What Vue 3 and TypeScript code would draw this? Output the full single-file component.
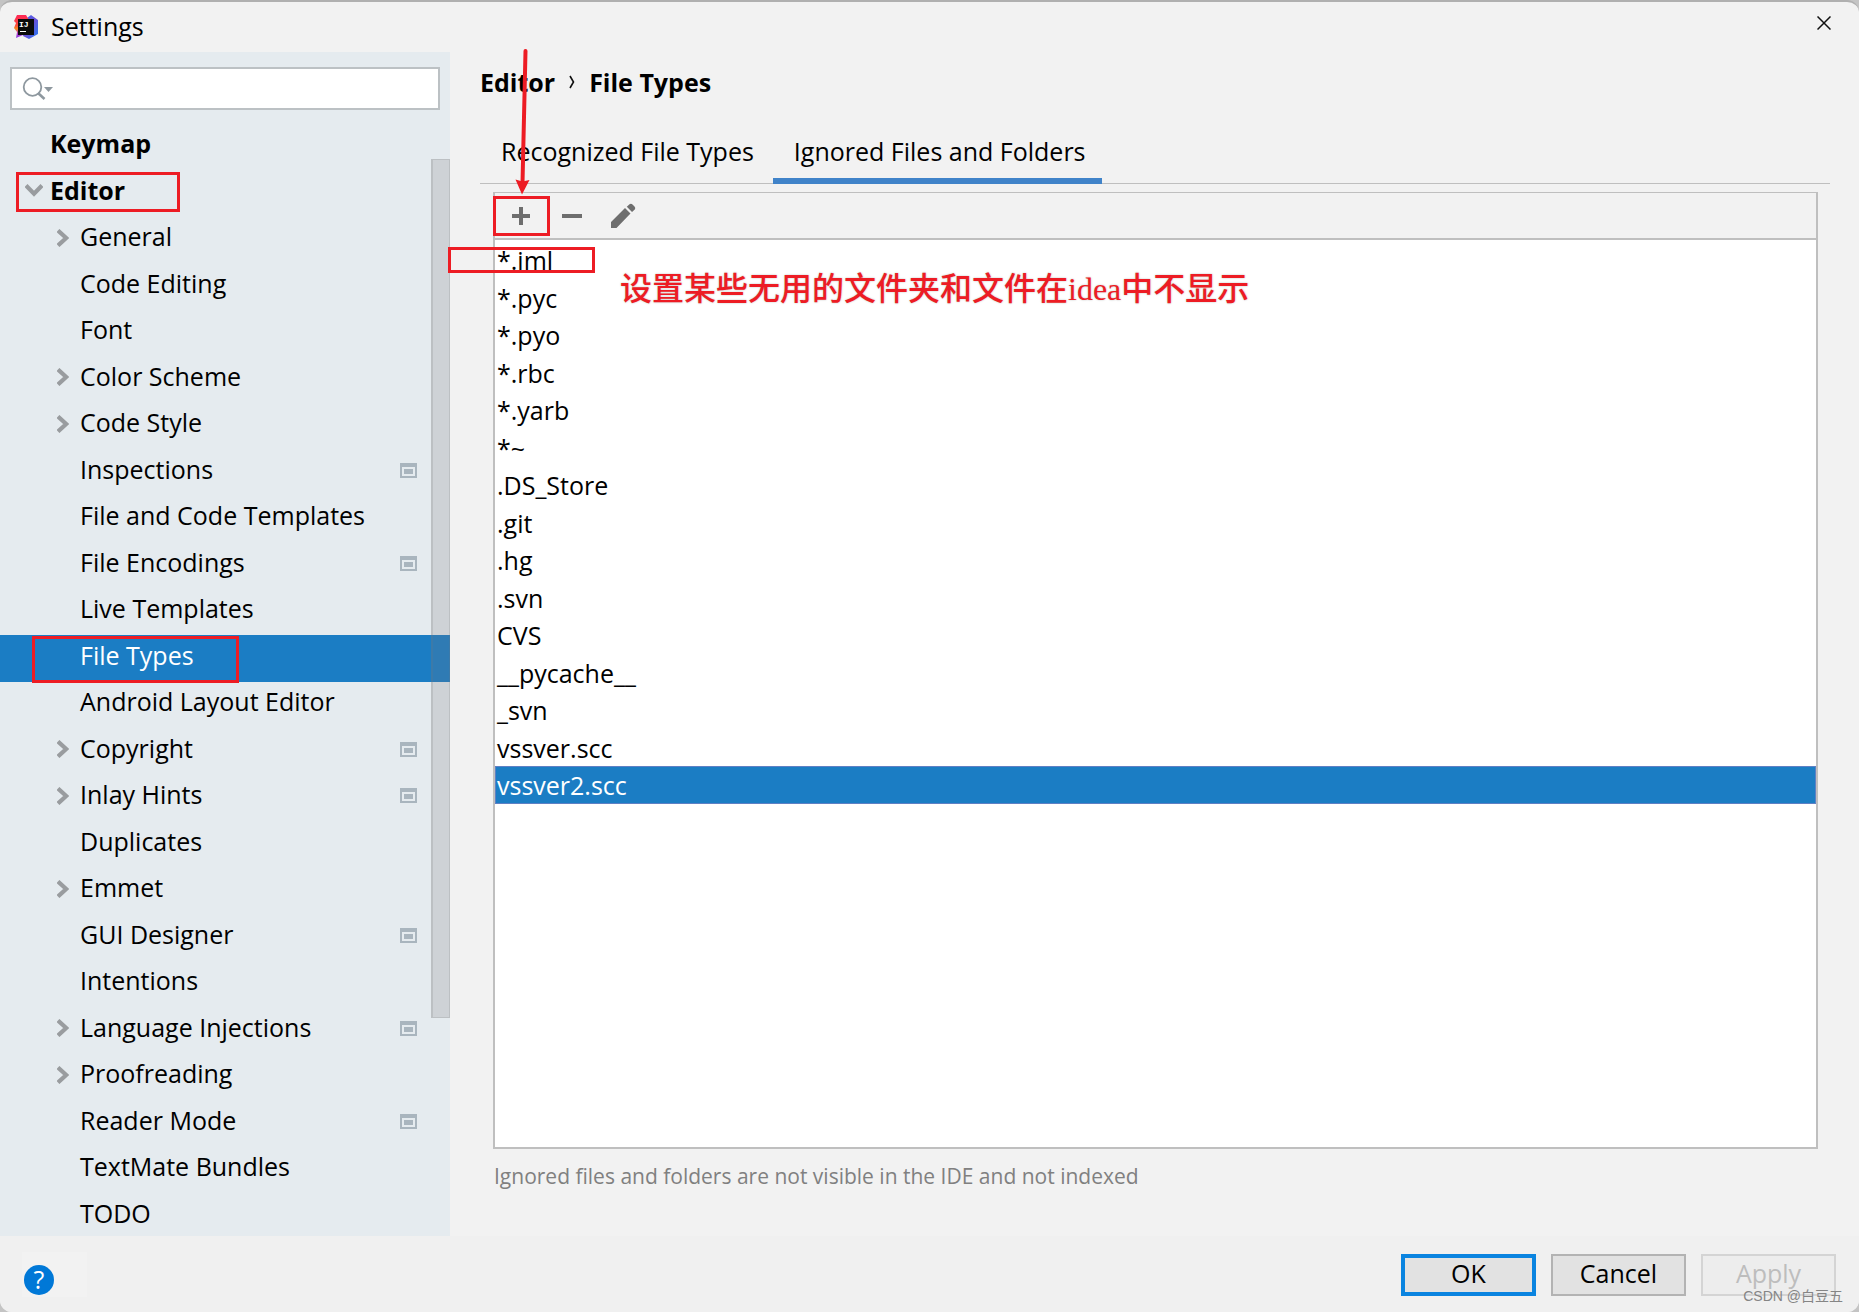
<script setup lang="ts">
import { ref } from 'vue'

interface TreeNode {
  label: string
  level: 0 | 1
  arrow?: 'open' | 'closed'
  project?: boolean
  marked?: boolean
}

const tree: TreeNode[] = [
  { label: 'Keymap', level: 0 },
  { label: 'Editor', level: 0, arrow: 'open', marked: true },
  { label: 'General', level: 1, arrow: 'closed' },
  { label: 'Code Editing', level: 1 },
  { label: 'Font', level: 1 },
  { label: 'Color Scheme', level: 1, arrow: 'closed' },
  { label: 'Code Style', level: 1, arrow: 'closed' },
  { label: 'Inspections', level: 1, project: true },
  { label: 'File and Code Templates', level: 1 },
  { label: 'File Encodings', level: 1, project: true },
  { label: 'Live Templates', level: 1 },
  { label: 'File Types', level: 1, marked: true },
  { label: 'Android Layout Editor', level: 1 },
  { label: 'Copyright', level: 1, arrow: 'closed', project: true },
  { label: 'Inlay Hints', level: 1, arrow: 'closed', project: true },
  { label: 'Duplicates', level: 1 },
  { label: 'Emmet', level: 1, arrow: 'closed' },
  { label: 'GUI Designer', level: 1, project: true },
  { label: 'Intentions', level: 1 },
  { label: 'Language Injections', level: 1, arrow: 'closed', project: true },
  { label: 'Proofreading', level: 1, arrow: 'closed' },
  { label: 'Reader Mode', level: 1, project: true },
  { label: 'TextMate Bundles', level: 1 },
  { label: 'TODO', level: 1 },
]

const patterns = [
  '*.iml', '*.pyc', '*.pyo', '*.rbc', '*.yarb', '*~', '.DS_Store', '.git',
  '.hg', '.svn', 'CVS', '__pycache__', '_svn', 'vssver.scc', 'vssver2.scc',
]

const tabs = ['Recognized File Types', 'Ignored Files and Folders']

const page = ref('File Types')
const tab = ref(tabs[1])
const pattern = ref('vssver2.scc')
const query = ref('')
</script>

<template>
  <div class="window">
    <header class="titlebar">
      <svg class="logo" viewBox="0 0 24 24" aria-hidden="true">
        <defs>
          <linearGradient id="lg-blue" x1="0" y1="0" x2="1" y2="1">
            <stop offset="0" stop-color="#3a6cf0" />
            <stop offset="0.5" stop-color="#6a4fd8" />
            <stop offset="1" stop-color="#1f7cf2" />
          </linearGradient>
          <linearGradient id="lg-red" x1="0" y1="0" x2="0" y2="1">
            <stop offset="0" stop-color="#fe2857" />
            <stop offset="0.45" stop-color="#fc4a3a" />
            <stop offset="0.6" stop-color="#f98a1e" />
            <stop offset="0.8" stop-color="#b43fd0" />
            <stop offset="1" stop-color="#8a3ee0" />
          </linearGradient>
        </defs>
        <path d="M13 3 17 0 24 5 24 19 15 24 9 21Z" fill="url(#lg-blue)" />
        <path d="M3 0 12 0 15 5 9 20 2 23 3 17 0 13 2 8 0 6Z" fill="url(#lg-red)" />
        <rect x="4" y="4" width="16" height="16" fill="#0a0a0a" />
        <text x="5" y="12" class="logo-text">IJ</text>
        <rect x="6" y="16" width="6" height="1" fill="#fff" />
      </svg>
      <h1 class="title">Settings</h1>
      <button class="close" type="button" aria-label="Close">
        <svg viewBox="0 0 14 14" width="14" height="14"><path d="M0.500 0.500 13.500 13.500M13.500 0.500 0.500 13.500" stroke="#111" stroke-width="1.500" fill="none" /></svg>
      </button>
    </header>

    <div class="body">
      <aside class="sidebar">
        <label class="search">
          <svg width="32" height="24" viewBox="0 0 32 24" aria-hidden="true">
            <circle cx="10.500" cy="10" r="8.800" fill="none" stroke="#8e989f" stroke-width="1.800" />
            <path d="M16 16 22.500 22" stroke="#8e989f" stroke-width="2.600" />
            <path d="M22 10H31L26.500 15Z" fill="#8e989f" />
          </svg>
          <input v-model="query" type="text" aria-label="Search settings" />
        </label>

        <nav class="tree" aria-label="Settings pages">
          <button
            v-for="node in tree"
            :key="node.label"
            type="button"
            class="node"
            :class="{ top: node.level === 0, selected: node.label === page }"
            @click="page = node.label"
          >
            <span class="twisty">
              <svg v-if="node.arrow === 'closed'" width="12" height="18" viewBox="0 0 12 18"><path d="M1 1.500 9.200 9 1 16.500" fill="none" stroke="#999c9f" stroke-width="4.200" /></svg>
              <svg v-else-if="node.arrow === 'open'" width="18" height="14" viewBox="0 0 18 14"><path d="M1 1.500 9 9.800 17 1.500" fill="none" stroke="#999c9f" stroke-width="4.200" /></svg>
            </span>
            <span class="node-label">{{ node.label }}</span>
            <svg v-if="node.project" class="project" width="17" height="15" viewBox="0 0 17 15">
              <path d="M0 0H17V15H0Z" fill="#a9b5be" />
              <path d="M2 4H15V13H2Z" fill="#e5ebef" />
              <path d="M4 6H13V11H4Z" fill="#a9b5be" />
            </svg>
            <span v-if="node.marked" class="mark"></span>
          </button>
        </nav>
        <div class="scroll-thumb"></div>
      </aside>

      <main class="content">
        <div class="crumbs">
          <span>Editor</span>
          <svg width="6" height="14" viewBox="0 0 6 14"><path d="M1 1 4.500 7 1 13" fill="none" stroke="#111" stroke-width="1.600" /></svg>
          <span>File Types</span>
        </div>

        <div class="tabs" role="tablist">
          <button
            v-for="name in tabs"
            :key="name"
            type="button"
            role="tab"
            class="tab"
            :class="{ active: name === tab }"
            :aria-selected="name === tab"
            @click="tab = name"
          >{{ name }}</button>
        </div>

        <section class="panel">
          <div class="toolbar">
            <button type="button" class="tool" aria-label="Add">
              <svg width="20" height="20" viewBox="0 0 20 20"><path d="M10 1V19M1 10H19" stroke="#6e6e6e" stroke-width="4" /></svg>
              <span class="mark"></span>
              <svg class="arrow" width="16" height="146" viewBox="0 0 16 146" aria-hidden="true">
                <path d="M10.500 2 7.500 134" stroke="#ed1c24" stroke-width="4" stroke-linecap="round" />
                <path d="M0.500 130.500 7.500 132.500 14.500 131 7 145.500Z" fill="#ed1c24" />
              </svg>
            </button>
            <button type="button" class="tool" aria-label="Remove">
              <svg width="20" height="20" viewBox="0 0 20 20"><path d="M0 10H20" stroke="#6e6e6e" stroke-width="4" /></svg>
            </button>
            <button type="button" class="tool" aria-label="Edit">
              <svg width="26" height="26" viewBox="0 0 26 26"><path d="M1 19 15 5 20.500 10.500 6.500 25H1ZM16.800 3.800 19.500 1.200Q21 0 22.500 1.500L24.500 3.500Q26 5 24.800 6.500L22 9Z" fill="#6e6e6e" /></svg>
            </button>
          </div>
          <ul class="list" role="listbox" aria-label="Ignored files and folders">
            <li
              v-for="item in patterns"
              :key="item"
              role="option"
              class="row"
              :class="{ selected: item === pattern }"
              :aria-selected="item === pattern"
              @click="pattern = item"
            >
              {{ item }}
              <span v-if="item === '*.iml'" class="mark"></span>
            </li>
          </ul>
          <p class="note">设置某些无用的文件夹和文件在idea中不显示</p>
        </section>

        <p class="hint">Ignored files and folders are not visible in the IDE and not indexed</p>
      </main>
    </div>

    <footer class="footer">
      <div class="help-box"><button type="button" class="help" aria-label="Help">?</button></div>
      <div class="actions">
        <button type="button" class="btn primary">OK</button>
        <button type="button" class="btn">Cancel</button>
        <button type="button" class="btn" disabled>Apply</button>
      </div>
      <span class="watermark">CSDN @白豆五</span>
    </footer>
  </div>
</template>

<style>
body {
  background: #c4c4c4;
}
</style>

<style scoped>
* {
  box-sizing: border-box;
}

button {
  font: inherit;
  color: inherit;
  border: 0;
  padding: 0;
  background: none;
}

.window {
  display: flex;
  flex-direction: column;
  min-height: 100vh;
  overflow: hidden;
  border-top: 2px solid #b0b0b0;
  border-radius: 12px;
  background: #f2f2f2;
  color: #000;
  font: 25px/34px "Open Sans", "Noto Sans", sans-serif;
}

.titlebar {
  display: flex;
  align-items: center;
  height: 50px;
  padding: 0 28px 0 14px;
}

.logo {
  width: 24px;
  height: 24px;
}

.logo-text {
  font: bold 8px "Liberation Mono", monospace;
  fill: #fff;
}

.title {
  flex: 1;
  margin: 0 0 2px 13px;
  font-size: 25px;
  font-weight: 400;
}

.close {
  align-self: flex-start;
  display: flex;
  padding-top: 14px;
}

.body {
  flex: 1;
  display: flex;
}

.sidebar {
  position: relative;
  flex: none;
  width: 450px;
  height: 1184px;
  overflow: hidden;
  padding-top: 15px;
  background: #e5ebef;
}

.search {
  display: flex;
  align-items: center;
  height: 43px;
  margin: 0 10px 14px;
  padding-left: 10px;
  border: 2px solid #bcc1c4;
  background: #fff;
}

.search input {
  flex: 1;
  border: 0;
  outline: 0;
  background: none;
  font: inherit;
}

.node {
  position: relative;
  display: flex;
  align-items: center;
  width: 100%;
  height: 46px;
  padding: 0 33px 5px 49px;
  text-align: left;
}

.node:nth-child(even) {
  height: 47px;
}

.node.top {
  padding-left: 17px;
  font-weight: 700;
}

.node.selected {
  background: #1b7dc4;
  color: #fff;
}

.twisty {
  display: flex;
  flex: none;
  justify-content: center;
  width: 27px;
  margin-right: 4px;
}

.top .twisty {
  justify-content: flex-start;
  width: 33px;
  margin-right: 0;
  padding-left: 8px;
}

.node-label {
  flex: 1;
  padding-bottom: 3px;
}

.mark {
  position: absolute;
  border: 3px solid #ed1c24;
}

.node .mark {
  left: 32px;
  top: 1px;
  bottom: -1px;
  width: 207px;
}

.node.top .mark {
  left: 16px;
  top: 2px;
  bottom: 5px;
  width: 164px;
}

.scroll-thumb {
  position: absolute;
  right: 0;
  top: 107px;
  width: 19px;
  height: 859px;
  border: 1px solid rgba(121, 118, 121, 0.2);
  border-left-width: 2px;
  background: rgba(121, 118, 121, 0.21);
}

.content {
  flex: 1;
  display: flex;
  flex-direction: column;
  min-width: 0;
  padding: 13px 29px 0 30px;
}

.crumbs {
  display: flex;
  align-items: center;
  gap: 14px;
  font-weight: 700;
}

.tabs {
  display: flex;
  gap: 3px;
  height: 60px;
  margin-top: 25px;
  border-bottom: 1px solid #bfbfbf;
}

.tab {
  height: 60px;
  padding: 0 16px 0 21px;
  border-bottom: 6px solid transparent;
}

.tab.active {
  border-bottom-color: #4083c9;
}

.panel {
  position: relative;
  flex: 1;
  display: flex;
  flex-direction: column;
  margin: 8px 12px 0 13px;
  border: 2px solid #bfbfbf;
  border-top-width: 1px;
  background: #fff;
}

.toolbar {
  display: flex;
  align-items: center;
  height: 47px;
  border-bottom: 2px solid #bfbfbf;
  background: #f2f2f2;
}

.tool {
  position: relative;
  display: flex;
  align-items: center;
  justify-content: center;
  width: 51px;
  height: 45px;
}

.tool .mark {
  left: -2px;
  top: 3px;
  width: 57px;
  height: 40px;
}

.arrow {
  position: absolute;
  left: 20px;
  bottom: 43px;
  z-index: 1;
}

.list {
  margin: 0;
  padding: 1px 0 0;
  list-style: none;
}

.row {
  position: relative;
  height: 38px;
  padding-left: 2px;
  line-height: 38px;
}

.row:nth-child(even) {
  height: 37px;
}

.row.selected {
  border: 1px solid #5f80c4;
  padding-left: 1px;
  background: #1b7dc4;
  color: #fff;
  line-height: 36px;
}

.row .mark {
  left: -47px;
  top: 6px;
  width: 147px;
  height: 26px;
}

.note {
  position: absolute;
  left: 125px;
  top: 73px;
  margin: 0;
  color: #ed1c24;
  font: 500 32px/46px "Liberation Serif", "Noto Sans CJK SC", serif;
  text-shadow: 0 0 2px #bbb;
}

.hint {
  margin: 12px 14px 44px;
  color: #808080;
  font-size: 21px;
  line-height: 31px;
}

.footer {
  position: relative;
  display: flex;
  align-items: flex-start;
  justify-content: space-between;
  height: 76px;
  padding: 16px 23px 0 22px;
  background: #f0f0f0;
}

.help-box {
  width: 65px;
  height: 45px;
  padding: 10px 2px;
  background: #f2f2f2;
}

.help {
  width: 30px;
  height: 30px;
  padding-bottom: 2px;
  border-radius: 50%;
  background: #0078d7;
  color: #fff;
  line-height: 28px;
}

.actions {
  display: flex;
  gap: 15px;
  padding-top: 2px;
}

.btn {
  width: 135px;
  height: 42px;
  padding-bottom: 4px;
  border: 2px solid #b3b3b3;
  background: #e2e2e2;
  line-height: 30px;
}

.btn.primary {
  border: 4px solid #0a84e0;
}

.btn:disabled {
  border-color: #d4d4d4;
  background: #ededed;
  color: #bdbdbd;
}

.watermark {
  position: absolute;
  right: 16px;
  bottom: 4px;
  color: #858585;
  font: 14px/24px "Liberation Sans", "Noto Sans CJK SC", sans-serif;
}
</style>
